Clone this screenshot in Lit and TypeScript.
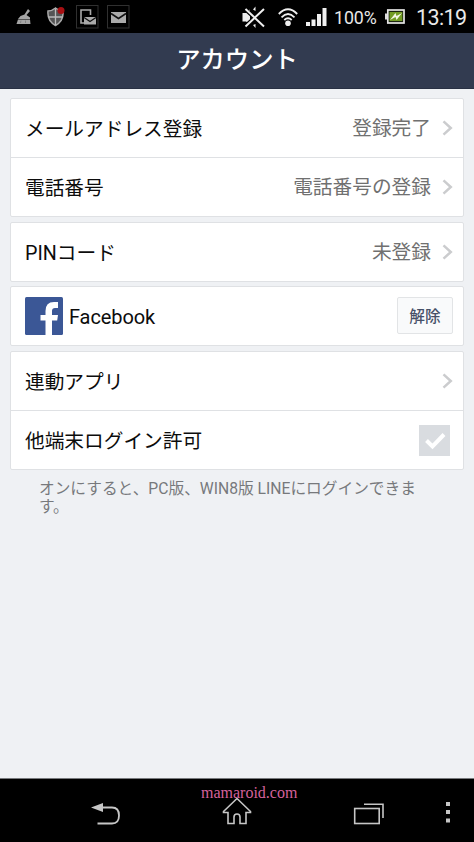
import { LitElement, html, css } from "lit";
import { customElement, property } from "lit/decorators.js";

const chevron = html`<svg class="chevron" width="11" height="18" viewBox="0 0 11 18">
  <path d="M1.500 2.300 L8.800 9 L1.500 15.700" fill="none" stroke="#cbccce" stroke-width="2.500" />
</svg>`;

@customElement("status-bar")
class StatusBar extends LitElement {
  static styles = css`
    :host { display: flex; align-items: center; height: 33px; background: #000; color: #e8e8e8;
      font-family: Roboto, "Noto Sans", sans-serif; box-sizing: border-box; padding: 0 8px 0 16px; }
    svg { display: block; flex: none; }
    .shield { margin-left: 15px; }
    .app { margin-left: 11px; }
    .mail { margin-left: 8px; }
    .space { flex: 1; }
    .wifi { margin-left: 12px; }
    .signal { margin-left: 8px; }
    .percent { margin-left: 7px; width: 43px; font-size: 17.8px; line-height: 33px; white-space: nowrap; letter-spacing: -0.1px; padding-top: 2px; }
    .battery { margin-left: 8px; }
    .clock { margin-left: 11px; width: 50px; font-size: 21.5px; line-height: 33px; white-space: nowrap; letter-spacing: -0.6px; padding-top: 1px; }
  `;
  render() {
    return html`
      <svg width="16" height="18" viewBox="0 0 16 18">
        <path d="M12 1 L14 3 L10.500 7 L14 9.500 V11 H2 L4.500 8 L8.500 6.500 Z" fill="#a4a4a4" />
        <path d="M2 11.500 H14 L14.500 16 H0.500 Z" fill="#a4a4a4" />
        <path d="M5 12.500 L4.500 15 M9.500 12.500 V15" stroke="#777" stroke-width=".8" />
      </svg>
      <svg class="shield" width="18" height="20" viewBox="0 0 18 20">
        <path d="M1 4 Q5 4 8.500 1 Q12 4 16 4 Q17 14 8.500 18.500 Q0 14 1 4Z" fill="#555" stroke="#aaa" stroke-width="1.500" />
        <path d="M8.500 2 V18 M1.500 10 H15.500" stroke="#bbb" stroke-width="1.300" />
        <circle cx="14" cy="3.500" r="3.500" fill="#a80f12" />
      </svg>
      <svg class="app" width="23" height="24" viewBox="0 0 23 24">
        <rect x=".5" y=".5" width="21.500" height="22.500" fill="none" stroke="#303030" />
        <path d="M14.500 10 V5 H5 V18 H8" fill="none" stroke="#aaa" stroke-width="1.600" />
        <path d="M8 12 H20 V19.500 H8Z" fill="#aaa" /><path d="M8 12.500 L14 16.500 L20 12.500" fill="none" stroke="#111" stroke-width="1.300" />
      </svg>
      <svg class="mail" width="23" height="24" viewBox="0 0 23 24">
        <rect x=".5" y=".5" width="21.500" height="22.500" fill="none" stroke="#303030" />
        <path d="M4 7 H19 V18 H4Z" fill="#aaa" /><path d="M4 8.500 L11.500 13.500 L19 8.500" fill="none" stroke="#111" stroke-width="1.600" />
      </svg>
      <span class="space"></span>
      <svg width="24" height="24" viewBox="0 0 24 24">
        <path d="M0.500 8 H4 L8 4.500 V19.500 L4 16.500 H0.500Z" fill="#eee" />
        <path d="M3 4 L22 21.500 M22 4 L3 21.500" stroke="#000" stroke-width="4" />
        <path d="M3.500 4 L22 21.500 M22 4 L3.500 21.500" stroke="#eee" stroke-width="2" />
        <path d="M11 4.500 L13.500 1.500 V6Z M11 20 L13.500 23 V19Z" fill="#eee" />
      </svg>
      <svg class="wifi" width="20" height="20" viewBox="0 0 20 20">
        <path d="M.8 7 Q10 -2.500 19.200 7 M3.500 10.300 Q10 3.800 16.500 10.300 M6.300 13 Q10 9.400 13.700 13" fill="none" stroke="#eee" stroke-width="1.800" />
        <circle cx="10" cy="16.200" r="2.800" fill="#eee" />
      </svg>
      <svg class="signal" width="21" height="18" viewBox="0 0 21 18">
        <path d="M0 14H4V18H0Z M5.500 11.500H9.500V18H5.500Z M11 6H15V18H11Z M16.500 0H20.500V18H16.500Z" fill="#f0f0f0" />
      </svg>
      <span class="percent">100%</span>
      <svg class="battery" width="20" height="15" viewBox="0 0 20 15">
        <path d="M0 4.500H2V10.500H0Z" fill="#ddd" />
        <rect x="2.800" y="1" width="16.200" height="13" fill="#1b2410" stroke="#e5e5e5" stroke-width="1.700" />
        <rect x="4.500" y="3" width="12.800" height="9" fill="#729c24" />
        <path d="M5 11 L10.500 4 L11.500 7 L17 4 L11.500 11 L10.500 8Z" fill="#f3f7e5" />
      </svg>
      <span class="clock">13:19</span>
    `;
  }
}

@customElement("setting-row")
class SettingRow extends LitElement {
  @property() label = "";
  @property() value = "";
  @property() kind = "link";
  static styles = css`
    :host { display: flex; align-items: center; height: 58px; padding: 0 10px 0 14px; color: #0c0c0c; font-size: 19.7px; }
    .logo { display: block; margin-right: 6px; }
    .label { flex: 1; white-space: nowrap; margin-top: -2px; }
    .label.latin { font-size: 20px; letter-spacing: -0.1px; margin-top: 1px; }
    .value { color: #707070; white-space: nowrap; margin: -3px 11px 0 0; }
    .chevron { display: block; }
    .button { box-sizing: border-box; width: 56px; height: 37px; margin: -1px 0 0; padding: 0; border: 1px solid #e2e4e6;
      border-radius: 2px; background: #f9fafb; color: #465068; font: 500 15.7px/34px "Noto Sans CJK JP", sans-serif; }
    .check { display: block; margin-right: 3px; }
  `;
  render() {
    return html`
      ${this.kind === "facebook"
        ? html`<svg class="logo" width="38" height="38" viewBox="0 0 38 38">
            <rect width="38" height="38" rx="1.500" fill="#3b5796" />
            <path d="M20.500 38 V23.500 H15.500 V18 H20.500 V14 Q20.500 5 29 5 H33 V11 H30 Q27 11 27 14 V18 H33 L32.200 23.500 H27 V38Z" fill="#fff" />
          </svg>`
        : null}
      <span class="label ${this.kind === "facebook" ? "latin" : ""}">${this.label}</span>
      ${this.value ? html`<span class="value">${this.value}</span>` : null}
      ${this.kind === "link" ? chevron : null}
      ${this.kind === "facebook" ? html`<button class="button">解除</button>` : null}
      ${this.kind === "check"
        ? html`<svg class="check" width="31" height="31" viewBox="0 0 31 31">
            <rect width="31" height="31" fill="#d9dce0" />
            <path d="M7.500 15.500 L13.500 21.500 L25 9.500" fill="none" stroke="#fff" stroke-width="4" />
          </svg>`
        : null}
    `;
  }
}

@customElement("nav-bar")
class NavBar extends LitElement {
  static styles = css`
    :host { position: relative; display: flex; align-items: flex-start; box-sizing: border-box; height: 64px; background: #000;
      border-top: 1px solid #77797c; padding: 23px 23px 0 90px; }
    svg { display: block; flex: none; }
    .home { margin-left: 101px; margin-top: -5px; }
    .recent { margin-left: 101px; }
    .more { margin-left: auto; margin-top: -1px; }
    .mark { position: absolute; left: 201px; top: 4px; color: #d5629b; font: 16px/20px "Liberation Serif", serif; white-space: nowrap; }
  `;
  render() {
    return html`
      <svg width="31" height="24" viewBox="0 0 31 24">
        <path d="M1 5.500 L13 1 V10Z" fill="#c6c6c6" />
        <path d="M11 5.500 H22 Q29 5.500 29 13.500 Q29 21.500 22 21.500 H7.500" fill="none" stroke="#c6c6c6" stroke-width="1.800" />
      </svg>
      <svg class="home" width="30" height="30" viewBox="0 0 30 30">
        <path d="M15 1.500 L1.500 14.500 V15.500 H6 V26.500 H12 V20 Q12 17 15 17 Q18 17 18 20 V26.500 H24 V15.500 H28.500 V14.500Z" fill="none" stroke="#c6c6c6" stroke-width="1.600" />
      </svg>
      <svg class="recent" width="31" height="24" viewBox="0 0 31 24">
        <rect x="1.700" y="6.500" width="24.500" height="15" fill="none" stroke="#c6c6c6" stroke-width="1.600" />
        <path d="M11 2.300 H30 V16" fill="none" stroke="#c6c6c6" stroke-width="1.600" />
      </svg>
      <svg class="more" width="6" height="24" viewBox="0 0 6 24">
        <path d="M1 1H5V5H1Z M1 9H5V13H1Z M1 17.500H5V21.500H1Z" fill="#c6c6c6" />
      </svg>
      <span class="mark">mamaroid.com</span>
    `;
  }
}

@customElement("app-root")
class AppRoot extends LitElement {
  static styles = css`
    :host { display: flex; flex-direction: column; height: 842px; overflow: hidden; background: #eff1f4;
      font-family: Roboto, "Noto Sans CJK JP", sans-serif; }
    .title { height: 56px; margin: 0; background: #323b50; color: #fff; font-size: 24.3px; font-weight: 500; line-height: 53px;
      text-align: center; box-sizing: border-box; border-bottom: 1px solid #293144; }
    .content { flex: 1; padding: 9px 10px 0; }
    .card { background: #fff; border: 1px solid #dfe1e4; border-radius: 2px; margin-bottom: 5px; }
    .card.tight { margin-bottom: 4px; }
    .line { border-bottom: 1px solid #dfe1e4; }
    .note { margin: 10px 28px 0 29px; color: #77797c; font-size: 15.7px; line-height: 18px; white-space: nowrap; }
  `;
  render() {
    return html`
      <status-bar></status-bar>
      <h1 class="title">アカウント</h1>
      <main class="content">
        <section class="card">
          <setting-row class="line" label="メールアドレス登録" value="登録完了"></setting-row>
          <setting-row label="電話番号" value="電話番号の登録"></setting-row>
        </section>
        <section class="card tight"><setting-row label="PINコード" value="未登録"></setting-row></section>
        <section class="card"><setting-row kind="facebook" label="Facebook"></setting-row></section>
        <section class="card">
          <setting-row class="line" label="連動アプリ"></setting-row>
          <setting-row kind="check" label="他端末ログイン許可"></setting-row>
        </section>
        <p class="note">オンにすると、PC版、WIN8版 LINEにログインできま<br />す。</p>
      </main>
      <nav-bar></nav-bar>
    `;
  }
}
